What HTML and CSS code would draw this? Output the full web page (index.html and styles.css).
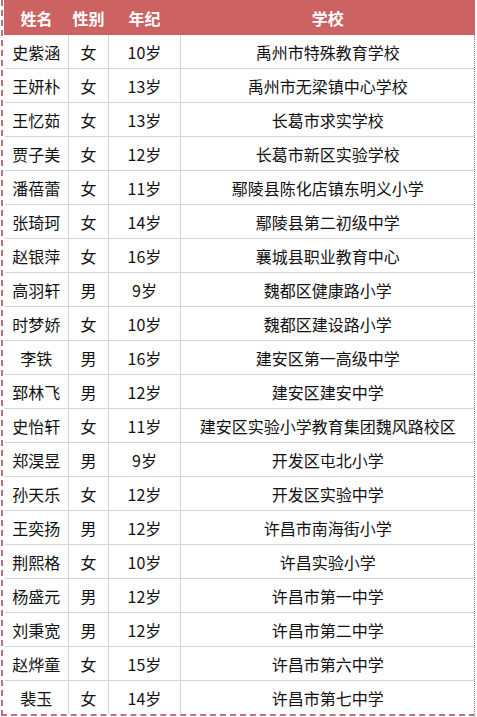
FILE: index.html
```html
<!DOCTYPE html>
<html lang="zh">
<head>
<meta charset="utf-8">
<link rel="stylesheet" href="styles.css">
</head>
<body>
<div class="frame">
<table class="roster">
<colgroup><col class="c-name"><col class="c-sex"><col class="c-age"><col class="c-school"></colgroup>
<thead>
<tr><th>姓名</th><th>性别</th><th>年纪</th><th>学校</th></tr>
</thead>
<tbody>
<tr><td>史紫涵</td><td>女</td><td>10岁</td><td>禹州市特殊教育学校</td></tr>
<tr><td>王妍朴</td><td>女</td><td>13岁</td><td>禹州市无梁镇中心学校</td></tr>
<tr><td>王忆茹</td><td>女</td><td>13岁</td><td>长葛市求实学校</td></tr>
<tr><td>贾子美</td><td>女</td><td>12岁</td><td>长葛市新区实验学校</td></tr>
<tr><td>潘蓓蕾</td><td>女</td><td>11岁</td><td>鄢陵县陈化店镇东明义小学</td></tr>
<tr><td>张琦珂</td><td>女</td><td>14岁</td><td>鄢陵县第二初级中学</td></tr>
<tr><td>赵银萍</td><td>女</td><td>16岁</td><td>襄城县职业教育中心</td></tr>
<tr><td>高羽轩</td><td>男</td><td>9岁</td><td>魏都区健康路小学</td></tr>
<tr><td>时梦娇</td><td>女</td><td>10岁</td><td>魏都区建设路小学</td></tr>
<tr><td>李铁</td><td>男</td><td>16岁</td><td>建安区第一高级中学</td></tr>
<tr><td>郅林飞</td><td>男</td><td>12岁</td><td>建安区建安中学</td></tr>
<tr><td>史怡轩</td><td>女</td><td>11岁</td><td>建安区实验小学教育集团魏风路校区</td></tr>
<tr><td>郑淏昱</td><td>男</td><td>9岁</td><td>开发区屯北小学</td></tr>
<tr><td>孙天乐</td><td>女</td><td>12岁</td><td>开发区实验中学</td></tr>
<tr><td>王奕扬</td><td>男</td><td>12岁</td><td>许昌市南海街小学</td></tr>
<tr><td>荆熙格</td><td>女</td><td>10岁</td><td>许昌实验小学</td></tr>
<tr><td>杨盛元</td><td>男</td><td>12岁</td><td>许昌市第一中学</td></tr>
<tr><td>刘秉宽</td><td>男</td><td>12岁</td><td>许昌市第二中学</td></tr>
<tr><td>赵烨童</td><td>女</td><td>15岁</td><td>许昌市第六中学</td></tr>
<tr><td>裴玉</td><td>女</td><td>14岁</td><td>许昌市第七中学</td></tr>
</tbody>
</table>
</div>
</body>
</html>
```

FILE: styles.css
```css
html, body {
  margin: 0;
  padding: 0;
  background: #ffffff;
}
body {
  font-family: "Noto Sans CJK SC", "Noto Sans", sans-serif;
  color: #111111;
}
.frame {
  width: 470px;
  margin-left: 1px;
  padding-left: 1px;
  border-left: 2px dashed #b77480;
  border-bottom: 2px dashed #b77480;
  border-right: 1px dotted #8a7a7e;
}
.roster {
  width: 470px;
  border-collapse: collapse;
  table-layout: fixed;
}
.c-name { width: 64px; }
.c-sex { width: 40px; }
.c-age { width: 72px; }
.c-school { width: 294px; }
.roster th {
  background: #cc6262;
  color: #ffffff;
  font-weight: bold;
  font-size: 16px;
  height: 35px;
  padding: 0;
  text-align: center;
  border-left: 1px solid #cc6262;
}
.roster td {
  height: 33px;
  padding: 0;
  font-size: 16px;
  text-align: center;
  border: 1px solid #d4d4d4;
  border-top: none;
  white-space: nowrap;
}
.roster td:first-child { border-left: none; }
.roster td:last-child { border-right: none; }
.roster tbody tr:last-child td { border-bottom: none; }
```
